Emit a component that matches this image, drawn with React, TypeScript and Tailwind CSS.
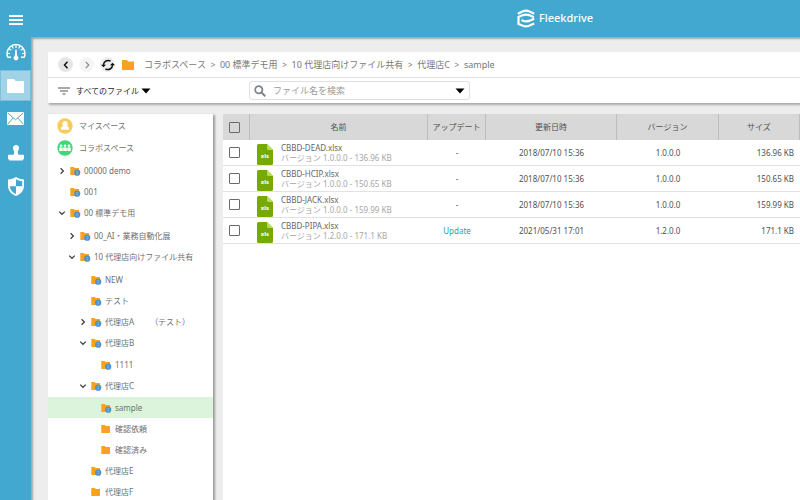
import { Fragment } from "react";

type Node = {
  name: string;
  note?: string;
  depth: number;
  open?: boolean;
  hasChildren?: boolean;
  plain?: boolean;
  selected?: boolean;
};

const crumbs = ["コラボスペース", "00 標準デモ用", "10 代理店向けファイル共有", "代理店C", "sample"];

const nodes: Node[] = [
  { name: "00000 demo", depth: 0, hasChildren: true },
  { name: "001", depth: 0 },
  { name: "00 標準デモ用", depth: 0, hasChildren: true, open: true },
  { name: "00_AI・業務自動化展", depth: 1, hasChildren: true },
  { name: "10 代理店向けファイル共有", depth: 1, hasChildren: true, open: true },
  { name: "NEW", depth: 2 },
  { name: "テスト", depth: 2 },
  { name: "代理店A", note: "（テスト）", depth: 2, hasChildren: true },
  { name: "代理店B", depth: 2, hasChildren: true, open: true },
  { name: "1111", depth: 3 },
  { name: "代理店C", depth: 2, hasChildren: true, open: true },
  { name: "sample", depth: 3, selected: true },
  { name: "確認依頼", depth: 3, plain: true },
  { name: "確認済み", depth: 3, plain: true },
  { name: "代理店E", depth: 2 },
  { name: "代理店F", depth: 2, plain: true },
];

const indents = ["pl-[10px]", "pl-[20px]", "pl-[31px]", "pl-[41px]"];
// extra room above the first child of an opened folder
const childGaps = ["", "mt-[2px]", "mt-[2px]", "mt-px"];

const files = [
  { name: "CBBD-DEAD.xlsx", update: "-", date: "2018/07/10 15:36", version: "1.0.0.0", size: "136.96 KB" },
  { name: "CBBD-HCIP.xlsx", update: "-", date: "2018/07/10 15:36", version: "1.0.0.0", size: "150.65 KB" },
  { name: "CBBD-JACK.xlsx", update: "-", date: "2018/07/10 15:36", version: "1.0.0.0", size: "159.99 KB" },
  { name: "CBBD-PIPA.xlsx", update: "Update", date: "2021/05/31 17:01", version: "1.2.0.0", size: "171.1 KB" },
];

const Logo = () => (
  <svg viewBox="0 0 18 19" className="h-[19px] w-[18px]" fill="none" stroke="white" strokeWidth="2.200">
    <path d="M.8 4.800L6 2.200Q9 1 12 2.200L17.200 4.800" />
    <path d="M17 8.200L12 6.100Q9 5 6 6.100L1.500 8V15L6 16.800Q9 18 12 16.800L17.200 14.500" />
    <path d="M4.500 11l1.500.8Q9 13 12 11.900L17.200 9.800" />
  </svg>
);

const Gauge = () => (
  <svg viewBox="0 0 20 18" className="h-[18px] w-5" fill="none" stroke="white">
    <path d="M5 14.300H1.800A9 9 0 0 1 1 10.500a9 9 0 0 1 18 0 9 9 0 0 1-.8 3.800H15" strokeWidth="1.400" />
    <path d="M10 1.500v3.500M6 2.700l1.300 2.800M14 2.700l-1.300 2.800M2.800 5.500l2.500 1.800M17.200 5.500l-2.500 1.800M1 10.500h3M19 10.500h-3" strokeWidth="1.200" />
    <path d="M9.400 6.500h1.200l.6 6.500a2.300 2.300 0 1 1-2.400 0z" fill="white" stroke="none" />
  </svg>
);

const FolderShape = ({ className }: { className: string }) => (
  <svg viewBox="0 0 20 16" className={className} fill="currentColor" preserveAspectRatio="none">
    <path d="M1 0h7l2.200 2.400H19a1 1 0 0 1 1 1V15a1 1 0 0 1-1 1H1a1 1 0 0 1-1-1V1a1 1 0 0 1 1-1z" />
  </svg>
);

const Mail = () => (
  <svg viewBox="0 0 17 13" className="h-[13px] w-[17px]">
    <path d="M0 0h17v13H0z" fill="white" />
    <path d="M.5.8l8 7 8-7M.5 12.400l5.600-6.400M16.500 12.400l-5.600-6.400" fill="none" stroke="#43a8d0" strokeWidth="1" />
  </svg>
);

const Stamp = () => (
  <svg viewBox="0 0 16 16" className="size-4" fill="white">
    <path d="M8 0a3.100 3.100 0 0 1 3 3.600C10.800 5 9.600 6 9.800 7.800c.1 1.200.4 2 1.200 2h4.200a.8.8 0 0 1 .8.8v3a.8.8 0 0 1-.8.8H.8a.8.8 0 0 1-.8-.8v-3a.8.8 0 0 1 .8-.8H5c.8 0 1.100-.8 1.200-2C6.400 6 5.200 5 5 3.600A3.100 3.100 0 0 1 8 0z" />
    <path d="M1.200 14h13.600v1.500H1.200z" />
  </svg>
);

const Shield = () => (
  <svg viewBox="0 0 16 19" className="h-[19px] w-4">
    <path d="M8 0c2.200 1.500 5 2.300 8 2.500v6.300c0 4.800-3.200 8.400-8 10.200-4.800-1.800-8-5.400-8-10.200V2.500C3 2.300 5.800 1.500 8 0z" fill="white" />
    <path d="M8 2.200v7h6.200V4.100C12 3.900 9.800 3.300 8 2.200zM8 9.200H1.800c.2 3.700 2.700 6.300 6.200 7.800z" fill="#43a8d0" />
  </svg>
);

const Caret = ({ open }: { open?: boolean }) => (
  <svg viewBox="0 0 8 8" className="size-2" fill="none" stroke="#444" strokeWidth="1.300">
    <path d={open ? "M1.200 2.600L4 5.300l2.800-2.700" : "M2.600 1.200L5.400 4 2.600 6.800"} />
  </svg>
);

const TreeFolder = ({ plain }: { plain?: boolean }) => (
  <svg viewBox="0 0 11 10" className="h-[10px] w-[11px]">
    <path d="M.3 1h3.400l1.200 1H9v7H.3z" fill="#f9a220" />
    {!plain && (
      <>
        <circle cx="7.200" cy="6.700" r="3.100" fill="#4c8fc7" />
        <path d="M5.600 5.700h3.200M5.600 7.700h3.200M7.200 4.500v4.400" stroke="#8fbbe0" strokeWidth=".5" />
      </>
    )}
  </svg>
);

const XlsIcon = () => (
  <svg viewBox="0 0 16 21" className="h-[21px] w-4 shrink-0">
    <path d="M1.500 0H10l6 6v13.500a1.500 1.500 0 0 1-1.500 1.500h-13A1.500 1.500 0 0 1 0 19.500v-18A1.500 1.500 0 0 1 1.500 0z" fill="#76aa03" />
    <path d="M10 0l6 6h-4.500A1.500 1.500 0 0 1 10 4.500z" fill="#b5dd55" />
    <text x="8" y="14" textAnchor="middle" fontSize="6" fontWeight="700" fill="white">xls</text>
  </svg>
);

const Triangle = () => (
  <svg viewBox="0 0 10 6" className="h-[6px] w-[10px]" fill="black">
    <path d="M.5.5h9L5 5.500z" />
  </svg>
);

const boxClass = "block size-[11px] appearance-none rounded-[1px] border border-[#6a6a6a] bg-transparent checked:bg-[#6a6a6a]";

function Sidebar() {
  return (
    <nav className="flex w-[31px] shrink-0 flex-col items-center bg-[#43a8d0]">
      <a href="#dashboard" aria-label="Dashboard" className="flex h-[33px] w-full justify-center pt-[6px]"><Gauge /></a>
      <a href="#files" aria-label="Files" className="flex h-[31px] w-full items-center justify-center border border-[#7fbedb] bg-[#a1d3e7] text-white">
        <FolderShape className="h-[14px] w-[17px]" />
      </a>
      <a href="#mail" aria-label="Mail" className="flex h-[35px] w-full items-center justify-center"><Mail /></a>
      <a href="#approve" aria-label="Approve" className="flex h-[33px] w-full items-center justify-center"><Stamp /></a>
      <a href="#security" aria-label="Security" className="flex h-[34px] w-full items-center justify-center"><Shield /></a>
    </nav>
  );
}

function Toolbar() {
  return (
    <section className="bg-white shadow-[1px_2px_2px_rgba(0,0,0,0.28)]">
      <div className="flex h-[26px] items-center border-b border-[#e2e2e2] pl-[10px]">
        <button aria-label="Back" className="flex size-[15px] items-center justify-center rounded-full bg-[#e6e6e6]">
          <svg viewBox="0 0 8 8" className="size-2" fill="none" stroke="#111" strokeWidth="1.500"><path d="M5.500.8L2.500 4l3 3.200" /></svg>
        </button>
        <button aria-label="Forward" className="ml-[6px] flex size-[15px] items-center justify-center rounded-full bg-[#f5f5f5]">
          <svg viewBox="0 0 8 8" className="size-2" fill="none" stroke="#888" strokeWidth="1.200"><path d="M2.800.8l3 3.200-3 3.200" /></svg>
        </button>
        <button aria-label="Reload" className="ml-[6px] flex size-[15px] items-center justify-center rounded-full bg-[#ededed]">
          <svg viewBox="0 0 14 12" className="h-3 w-[14px] shrink-0" fill="none" stroke="#111" strokeWidth="1.500">
            <path d="M2.500 6A4.600 4.600 0 0 1 9.600 2.200M11.500 6a4.600 4.600 0 0 1-7.100 3.800" />
            <path d="M0 5.800h5L2.500 8.300zM9 6.200h5L11.500 3.700z" fill="#111" stroke="none" />
          </svg>
        </button>
        <FolderShape className="ml-[7px] h-[10px] w-3 text-[#f9a220]" />
        <div className="ml-[10px] flex items-center text-[9px] text-[#777]">
          {crumbs.map((crumb, i) => (
            <Fragment key={crumb}>
              {i > 0 && <span className="w-[14px] text-center text-[8px]">&gt;</span>}
              <a href="#crumb">{crumb}</a>
            </Fragment>
          ))}
        </div>
      </div>
      <div className="flex h-[25px] items-center pl-[10px]">
        <svg viewBox="0 0 12 8" className="h-2 w-3" stroke="#555" strokeWidth="1.200"><path d="M0 1h12M2 4h8M4.500 7h3" /></svg>
        <button className="ml-[6px] flex w-[173px] items-center gap-[2px] text-[8px] text-[#222]">
          すべてのファイル
          <Triangle />
        </button>
        <label className="flex h-[19px] w-[221px] items-center rounded-[3px] border border-[#e0e0e0] px-1">
          <svg viewBox="0 0 12 12" className="size-3 shrink-0" fill="none" stroke="#80858c">
            <circle cx="4.800" cy="4.800" r="3.600" strokeWidth="1.800" />
            <path d="M7.500 7.500l3.700 3.700" strokeWidth="2" />
          </svg>
          <input type="text" aria-label="ファイル名を検索" placeholder="ファイル名を検索" className="ml-[7px] min-w-0 flex-1 text-[9px] outline-none placeholder:text-[#9b9b9b]" />
          <Triangle />
        </label>
      </div>
    </section>
  );
}

function Tree() {
  return (
    <aside className="w-[165px] shrink-0 bg-white text-[8px] text-[#707070] shadow-[2px_1px_2px_rgba(0,0,0,0.35)]">
      <a href="#myspace" className="mt-px flex h-[22px] items-center gap-[6px] pl-[9px]">
        <svg viewBox="0 0 16 16" className="size-4">
          <circle cx="8" cy="8" r="7.700" fill="#f6cb5c" />
          <path d="M8 3a2.800 2.800 0 0 1 1.700 5c1.900.5 2.500 1.600 2.500 3.700H3.800c0-2.100.6-3.200 2.500-3.700A2.800 2.800 0 0 1 8 3z" fill="white" />
        </svg>
        マイスペース
      </a>
      <a href="#collabo" className="flex h-[22px] items-center gap-[6px] pl-[9px]">
        <svg viewBox="0 0 16 16" className="size-4">
          <circle cx="8" cy="8" r="7.700" fill="#42d876" />
          <g fill="white">
            <circle cx="4" cy="5.800" r="1.300" />
            <circle cx="8" cy="5.800" r="1.300" />
            <circle cx="12" cy="5.800" r="1.300" />
            <path d="M2.200 7.500h3.500v3.600H2.200zM6.200 7.500h3.600v3.600H6.200zM10.300 7.500h3.500v3.600h-3.500z" />
          </g>
        </svg>
        コラボスペース
      </a>
      <ul className="mt-px">
        {nodes.map((node, i) => (
          <li key={node.name} className={i > 0 && node.depth > nodes[i - 1].depth ? childGaps[node.depth] : ""}>
            <button className={`flex h-[21px] w-full items-center ${indents[node.depth]} ${node.selected ? "bg-[#dcf4dc]" : ""}`}>
              <span className="w-3">{node.hasChildren && <Caret open={node.open} />}</span>
              <TreeFolder plain={node.plain} />
              <span className="ml-[3px]">{node.name}</span>
              {node.note && <span className="ml-4">{node.note}</span>}
            </button>
          </li>
        ))}
      </ul>
    </aside>
  );
}

function FileTable() {
  const th = "border-r border-[#bdbdbd] font-normal";
  return (
    <section className="min-w-0 flex-1 bg-white">
      <table className="w-full table-fixed border-separate border-spacing-0 text-[8px] text-[#505050]">
        <colgroup>
          <col className="w-[27px]" />
          <col />
          <col className="w-[58px]" />
          <col className="w-[131px]" />
          <col className="w-[102px]" />
          <col className="w-[81px]" />
        </colgroup>
        <thead>
          <tr className="h-[26px] bg-[#d8d8d8]">
            <th className={`${th} pl-[6px]`}><input type="checkbox" aria-label="Select all" className={boxClass} /></th>
            <th className={th}>名前</th>
            <th className={th}>アップデート</th>
            <th className={th}>更新日時</th>
            <th className={th}>バージョン</th>
            <th className={th}>サイズ</th>
          </tr>
        </thead>
        <tbody>
          {files.map((file) => (
            <tr key={file.name} className="h-[26px] text-center *:border-b *:border-[#e2e2e2] *:p-0">
              <td><input type="checkbox" aria-label={file.name} className={`${boxClass} ml-[6px]`} /></td>
              <td>
                <div className="flex h-[25px] items-end gap-2 pl-[7px] text-left leading-[10px]">
                  <XlsIcon />
                  <div className="pb-[2px]">
                    <p className="text-[#666]">{file.name}</p>
                    <p className="text-[#a6a6a6]">バージョン {file.version} - {file.size}</p>
                  </div>
                </div>
              </td>
              <td>{file.update === "-" ? "-" : <a href="#update" className="text-[#22a699]">{file.update}</a>}</td>
              <td>{file.date}</td>
              <td>{file.version}</td>
              <td className="text-right"><span className="pr-[6px]">{file.size}</span></td>
            </tr>
          ))}
        </tbody>
      </table>
    </section>
  );
}

export default function App() {
  return (
    <div className="flex h-screen flex-col overflow-hidden bg-[#ededed] font-['Noto_Sans','Noto_Sans_CJK_JP',sans-serif]">
      <header className="flex h-[37px] shrink-0 items-center bg-[#43a8d0] text-white">
        <button aria-label="Menu" className="ml-[9px]">
          <svg viewBox="0 0 14 10" className="mt-[3px] h-[10px] w-[14px]" stroke="white" strokeWidth="1.800"><path d="M0 1h14M0 5h14M0 9h14" /></svg>
        </button>
        <div className="flex flex-1 items-center justify-center gap-1 pl-[287px]">
          <Logo />
          <span className="text-[11px] font-medium">Fleekdrive</span>
        </div>
      </header>
      <div className="flex min-h-0 flex-1">
        <Sidebar />
        <main className="flex min-w-0 flex-1 flex-col gap-[11px] pt-[15px] pl-[17px] shadow-[inset_2px_2px_2px_rgba(0,0,0,0.3)]">
          <Toolbar />
          <div className="flex min-h-0 flex-1 gap-[10px]">
            <Tree />
            <FileTable />
          </div>
        </main>
      </div>
    </div>
  );
}
